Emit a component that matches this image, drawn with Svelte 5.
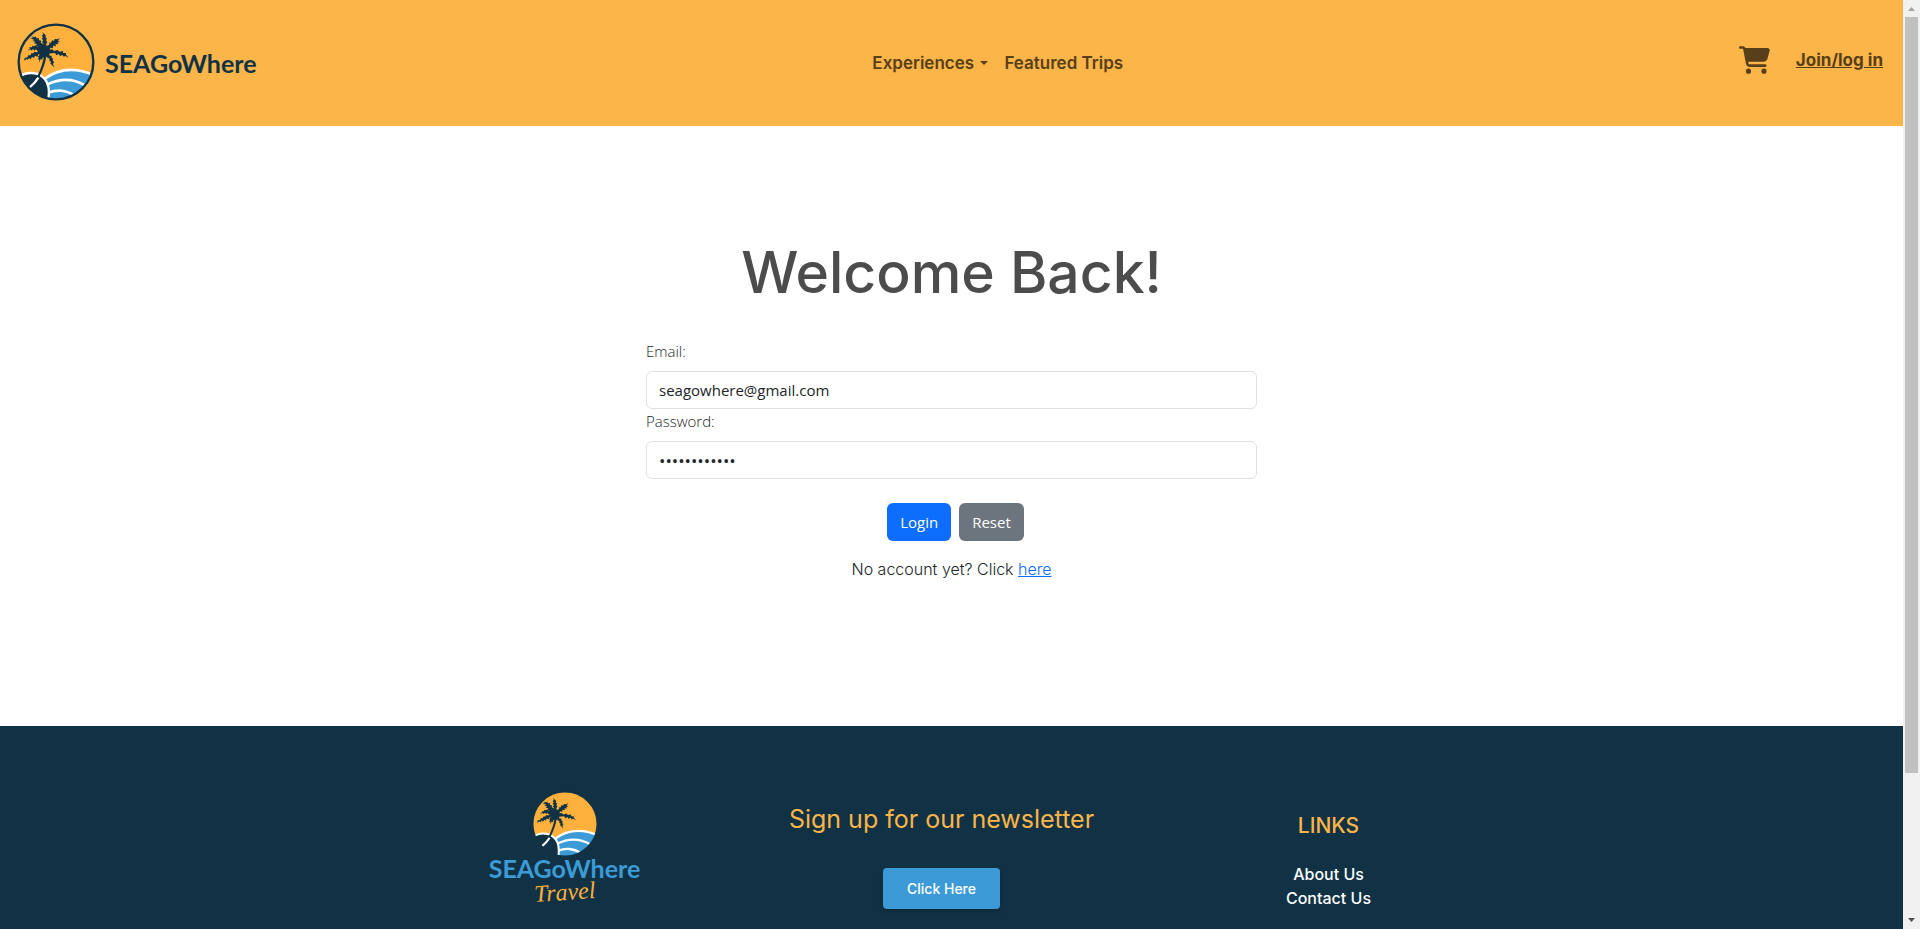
<script>
  let email = $state('seagowhere@gmail.com');
  let password = $state('travelseagow');

  function reset() {
    email = '';
    password = '';
  }
</script>

{#snippet emblem()}
  <svg class="emblem" viewBox="22 24 234 234" aria-hidden="true">
    <defs>
      <clipPath id="disc"><circle cx="139" cy="141" r="111" /></clipPath>
    </defs>
    <circle cx="139" cy="141" r="113" fill="#fdb03c" />
    <g clip-path="url(#disc)">
      <path d="M100 194C140 164 190 154 252 180V262H100Z" fill="#3c9bd6" />
      <g fill="none" stroke="#fff" stroke-width="8">
        <path d="M104 192C142 164 190 153 252 180" />
        <path d="M112 209C150 190 190 190 226 211" />
        <path d="M116 233C140 223 170 225 192 240" />
      </g>
      <path d="M24 188C50 168 82 172 97 184C114 197 123 222 114 262H24Z" fill="#113245" stroke="#fff" stroke-width="7" />
    </g>
    <g fill="#113245">
      <path d="M104 118L111 118C108 142 100 164 88 188L82 185C94 162 101 140 104 118Z" />
      <path d="M86 97Q104 84 118 97Q125 112 115 124Q100 132 90 120Z" />
      <path d="M99 98L102 86L97 82L101 75L96 72L100 66L96 62L101 58L98 50L105 58L109 62L107 66L112 71L109 76L113 81L109 88L113 102Z" />
      <path d="M94 102L87 94L79 92L82 87L73 85L77 80L68 78L75 75L61 70L70 69L64 63L74 67L77 64L81 70L87 69L88 76L95 77L93 83L101 87L107 100Z" />
      <path d="M111 102L114 89L118 91L120 82L124 84L127 76L133 78L135 72L143 73L151 69L145 77L151 82L143 82L146 88L137 87L139 94L130 92L130 99L122 98L117 108Z" />
      <path d="M98 98L88 92L84 95L79 90L74 94L68 92L67 97L57 96L62 99L53 107L63 103L64 107L71 102L73 107L80 103L83 108L98 110Z" />
      <path d="M100 109L87 107L82 112L75 110L71 115L65 115L62 121L55 121L54 127L46 128L42 137L51 132L54 135L58 129L63 133L67 126L73 129L76 122L83 125L86 118L98 120Z" />
      <path d="M112 105L128 103L133 108L144 105L149 110L160 108L160 114L169 114L169 119L177 128L166 122L163 126L157 119L152 124L147 117L140 121L136 114L126 115L112 116Z" />
      <path d="M110 114L118 115L120 122L126 122L126 129L131 131L129 138L134 141L130 146L133 157L126 149L122 145L124 140L119 137L120 131L113 128Z" />
      <path d="M94 116L104 118L103 127L98 128L98 135L93 132L89 143L89 134L84 132L88 127L84 125Z" />
    </g>
    <path d="M86 188C79 200 70 209 60 217" fill="none" stroke="#fff" stroke-width="7" />
    <circle cx="139" cy="141" r="112" fill="none" stroke="#113245" stroke-width="7" />
  </svg>
{/snippet}

<div class="window">
  <div class="page">
    <header>
      <a class="brand" href="#home">
        {@render emblem()}
        <span class="brand-name">SEAGoWhere</span>
      </a>
      <nav>
        <button class="nav-item" type="button">Experiences <span class="caret"></span></button>
        <a class="nav-item" href="#trips">Featured Trips</a>
      </nav>
      <div class="account">
        <a class="cart" href="#cart" aria-label="Cart">
          <svg viewBox="0 0 576 512" aria-hidden="true">
            <path d="M0 24C0 10.700 10.700 0 24 0H69.500C91.500 0 111 12.800 120.100 32H531C557.300 32 576.500 57 569.600 82.400L528.600 234.700C520.100 266.100 491.600 288 459 288H170.700L176.100 316.500C178.300 327.800 188.200 336 199.700 336H488C501.300 336 512 346.700 512 360S501.300 384 488 384H199.700C165.100 384 135.400 359.400 129 325.500L77.400 54.500C76.700 50.700 73.400 48 69.500 48H24C10.700 48 0 37.300 0 24ZM128 464A48 48 0 1 1 224 464A48 48 0 1 1 128 464ZM416 464A48 48 0 1 1 512 464A48 48 0 1 1 416 464Z" />
          </svg>
        </a>
        <a class="join" href="#login">Join/log in</a>
      </div>
    </header>

    <main>
      <h1>Welcome Back!</h1>
      <form onsubmit={(e) => e.preventDefault()}>
        <label for="email">Email:</label>
        <input id="email" type="email" bind:value={email} />
        <label for="password">Password:</label>
        <input id="password" type="password" bind:value={password} />
        <div class="actions">
          <button class="login" type="submit">Login</button>
          <button class="reset" type="button" onclick={reset}>Reset</button>
        </div>
      </form>
      <p>No account yet? Click <a href="#register">here</a></p>
    </main>

    <footer>
      <div class="columns">
        <div class="footer-brand">
          {@render emblem()}
          <span class="brand-name">SEAGoWhere</span>
          <span class="travel">Travel</span>
        </div>
        <section class="newsletter">
          <h2>Sign up for our newsletter</h2>
          <button type="button">Click Here</button>
        </section>
        <section class="links">
          <h3>LINKS</h3>
          <a href="#about">About Us</a>
          <a href="#contact">Contact Us</a>
        </section>
      </div>
    </footer>
  </div>

  <div class="scrollbar" aria-hidden="true">
    <svg viewBox="0 0 17 17"><path d="M5 11L8.500 7L12 11Z" fill="#a3a3a3" /></svg>
    <div class="track"><div class="thumb"></div></div>
    <svg viewBox="0 0 17 17"><path d="M5 6L8.500 10L12 6Z" fill="#505050" /></svg>
  </div>
</div>

<style>
  :global(body) {
    margin: 0;
  }

  .window {
    display: flex;
    height: 100vh;
    overflow: hidden;
    color: #212529;
    font: 16px/24px Inter, sans-serif;
  }

  .window * {
    box-sizing: border-box;
  }

  .page {
    flex: 1;
    min-width: 0;
    background: #fff;
  }

  button {
    border: 0;
    cursor: pointer;
  }

  header {
    display: flex;
    align-items: center;
    justify-content: space-between;
    padding: 23px 20px 25px 17px;
    background: #fbb548;
  }

  .brand {
    display: flex;
    align-items: center;
    gap: 10px;
    text-decoration: none;
  }

  .brand .emblem {
    width: 78px;
    height: 78px;
  }

  .brand-name {
    color: #113245;
    font: 700 25px/32px Lato, sans-serif;
  }

  .brand .brand-name {
    padding-top: 2px;
  }

  nav {
    display: flex;
    gap: 16px;
    padding-top: 2px;
  }

  .nav-item,
  .join {
    padding: 0;
    background: none;
    color: #583f19;
    font: 600 17px/24px Inter, sans-serif;
    text-decoration: none;
  }

  .caret {
    display: inline-block;
    margin-left: 2px;
    border: 4px solid transparent;
    border-top-color: #583f19;
    border-bottom: 0;
    vertical-align: 4px;
  }

  .account {
    display: flex;
    align-items: center;
    gap: 26px;
    padding-bottom: 4px;
  }

  .cart svg {
    display: block;
    width: 31px;
    height: 28px;
    fill: #583f19;
  }

  .join {
    font-weight: 700;
    text-decoration: underline;
  }

  main {
    display: flex;
    flex-direction: column;
    align-items: center;
    padding: 113px 16px 145px;
  }

  h1 {
    margin: 0 0 32px;
    color: #4c4c4c;
    font-size: 57px;
    font-weight: 500;
    line-height: 68px;
  }

  form {
    display: flex;
    flex-direction: column;
    width: 611px;
    max-width: 100%;
    font-family: "Open Sans", sans-serif;
  }

  label {
    margin-bottom: 8px;
    font-size: 15px;
    font-weight: 300;
  }

  input {
    height: 38px;
    padding: 6px 12px;
    border: 1px solid #dee2e6;
    border-radius: 6px;
    color: #212529;
    font: 15px/24px "Open Sans", sans-serif;
  }

  input[type="password"] {
    font-size: 17px;
  }

  .actions {
    display: flex;
    justify-content: center;
    gap: 8px;
    margin: 24px 0 16px;
    padding-left: 8px;
  }

  .actions button {
    height: 38px;
    padding: 0 13px;
    border-radius: 6px;
    color: #fff;
    font: 15px/24px "Open Sans", sans-serif;
  }

  .actions .login {
    background: #0d6efd;
  }

  .actions .reset {
    background: #6c757d;
  }

  p {
    margin: 0;
    font-weight: 300;
  }

  p a {
    color: #0d6efd;
  }

  footer {
    min-height: 374px;
    padding: 64px 16px;
    background: #113245;
  }

  .columns {
    display: grid;
    grid-template-columns: 350fr 404fr 370fr;
    max-width: 1124px;
    margin: 0 auto;
    text-align: center;
  }

  .columns > * {
    display: flex;
    flex-direction: column;
    align-items: center;
  }

  .footer-brand .emblem {
    width: 68px;
    height: 68px;
  }

  .footer-brand .brand-name {
    line-height: 20px;
    color: #3c9bd6;
  }

  .travel {
    padding-top: 2px;
    color: #fdb03c;
    font: italic 24px/24px "Liberation Serif", serif;
    rotate: -4deg;
  }

  h2 {
    margin: 13px 0 33px;
    color: #fbb548;
    font-size: 25px;
    font-weight: 400;
    line-height: 32px;
  }

  .newsletter button {
    height: 41px;
    padding: 0 24px;
    border-radius: 4px;
    background: #3c9bd6;
    box-shadow: 0 2px 4px rgb(0 0 0 / 25%);
    color: #fff;
    font: 500 14px/20px Inter, sans-serif;
  }

  h3 {
    margin: 24px 0 24px;
    color: #fbb548;
    font-size: 21px;
    font-weight: 500;
    line-height: 24px;
  }

  .links a {
    color: #fff;
    font-weight: 500;
    text-decoration: none;
  }

  .scrollbar {
    display: flex;
    flex-direction: column;
    width: 17px;
    background: #f1f1f1;
  }

  .scrollbar svg {
    display: block;
    width: 17px;
    height: 17px;
  }

  .track {
    flex: 1;
    padding: 0 2px;
  }

  .thumb {
    height: 84.5%;
    background: #c1c1c1;
  }
</style>
